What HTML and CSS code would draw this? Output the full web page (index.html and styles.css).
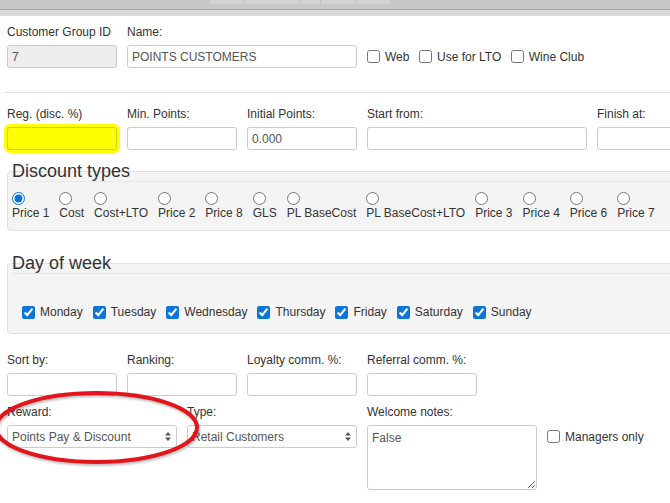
FILE: index.html
```html
<!DOCTYPE html>
<html lang="en">
<head>
    <meta charset="UTF-8">
    <meta name="viewport" content="width=device-width, initial-scale=1.0">
    <title>Customer Group</title>
    <link rel="stylesheet" href="styles.css">
</head>
<body>
    <div class="topbar">
        <div class="tabs">
            <span class="tab" style="width:34px"></span>
            <span class="tab" style="width:54px"></span>
            <span class="tab" style="width:20px"></span>
            <span class="tab" style="width:34px"></span>
            <span class="tab" style="width:34px"></span>
        </div>
    </div>
    <div class="topbar-sub"></div>

    <form class="group-form">
        <div class="row row-first">
            <div class="field w110">
                <label>Customer Group ID</label>
                <input type="text" class="readonly" value="7" readonly>
            </div>
            <div class="field w230">
                <label>Name:</label>
                <input type="text" value="POINTS CUSTOMERS">
            </div>
            <div class="checks top-checks">
                <label class="check"><input type="checkbox">Web</label>
                <label class="check"><input type="checkbox">Use for LTO</label>
                <label class="check"><input type="checkbox">Wine Club</label>
            </div>
        </div>

        <div class="divider"></div>

        <div class="row row-second">
            <div class="field w110">
                <label>Reg. (disc. %)</label>
                <input type="text" class="highlight">
            </div>
            <div class="field w110">
                <label>Min. Points:</label>
                <input type="text">
            </div>
            <div class="field w110">
                <label>Initial Points:</label>
                <input type="text" value="0.000">
            </div>
            <div class="field w220">
                <label>Start from:</label>
                <input type="text">
            </div>
            <div class="field w220">
                <label>Finish at:</label>
                <input type="text">
            </div>
        </div>

        <div class="box box-discount">
            <div class="box-title">Discount types</div>
            <div class="radios">
                <label class="radio"><input type="radio" name="dtype" checked><span>Price 1</span></label>
                <label class="radio"><input type="radio" name="dtype"><span>Cost</span></label>
                <label class="radio"><input type="radio" name="dtype"><span>Cost+LTO</span></label>
                <label class="radio"><input type="radio" name="dtype"><span>Price 2</span></label>
                <label class="radio"><input type="radio" name="dtype"><span>Price 8</span></label>
                <label class="radio"><input type="radio" name="dtype"><span>GLS</span></label>
                <label class="radio"><input type="radio" name="dtype"><span>PL BaseCost</span></label>
                <label class="radio"><input type="radio" name="dtype"><span>PL BaseCost+LTO</span></label>
                <label class="radio"><input type="radio" name="dtype"><span>Price 3</span></label>
                <label class="radio"><input type="radio" name="dtype"><span>Price 4</span></label>
                <label class="radio"><input type="radio" name="dtype"><span>Price 6</span></label>
                <label class="radio"><input type="radio" name="dtype"><span>Price 7</span></label>
            </div>
        </div>

        <div class="box box-days">
            <div class="box-title">Day of week</div>
            <div class="checks days">
                <label class="check"><input type="checkbox" checked>Monday</label>
                <label class="check"><input type="checkbox" checked>Tuesday</label>
                <label class="check"><input type="checkbox" checked>Wednesday</label>
                <label class="check"><input type="checkbox" checked>Thursday</label>
                <label class="check"><input type="checkbox" checked>Friday</label>
                <label class="check"><input type="checkbox" checked>Saturday</label>
                <label class="check"><input type="checkbox" checked>Sunday</label>
            </div>
        </div>

        <div class="row row-third">
            <div class="field w110">
                <label>Sort by:</label>
                <input type="text">
            </div>
            <div class="field w110">
                <label>Ranking:</label>
                <input type="text">
            </div>
            <div class="field w110">
                <label>Loyalty comm. %:</label>
                <input type="text">
            </div>
            <div class="field w110">
                <label>Referral comm. %:</label>
                <input type="text">
            </div>
        </div>

        <div class="row row-fourth">
            <div class="field w170">
                <label>Reward:</label>
                <div class="select-wrap">
                    <select>
                        <option>Points Pay &amp; Discount</option>
                    </select>
                    <svg class="arrows" width="6" height="9" viewBox="0 0 6 9"><path d="M3 0 L6 3.5 L0 3.5 Z M3 9 L6 5.5 L0 5.5 Z" fill="#555"/></svg>
                </div>
            </div>
            <div class="field w170">
                <label>Type:</label>
                <div class="select-wrap">
                    <select>
                        <option>Retail Customers</option>
                    </select>
                    <svg class="arrows" width="6" height="9" viewBox="0 0 6 9"><path d="M3 0 L6 3.5 L0 3.5 Z M3 9 L6 5.5 L0 5.5 Z" fill="#555"/></svg>
                </div>
            </div>
            <div class="field w170">
                <label>Welcome notes:</label>
                <textarea>False</textarea>
            </div>
            <div class="checks bottom-check">
                <label class="check"><input type="checkbox">Managers only</label>
            </div>
        </div>
    </form>

    <svg class="mark" width="230" height="100" viewBox="0 0 230 100">
        <ellipse cx="106.5" cy="49.5" rx="100.5" ry="34.5" fill="none" stroke="#e3141c" stroke-width="4"/>
    </svg>
</body>
</html>
```

FILE: styles.css
```css
html, body {
    margin: 0;
    overflow: hidden;
}

body {
    font-family: "Liberation Sans", Arial, sans-serif;
    font-size: 12px;
    color: #333;
    background: #fff;
}

.topbar {
    height: 9px;
    background: #c8c8c8;
    border-bottom: 1px solid #a6a6a6;
}

.tabs {
    display: flex;
    margin-left: 210px;
}

.tab {
    height: 4px;
    background: #d3d3d3;
    border-right: 1px solid #c3c3c3;
}

.topbar-sub {
    height: 6px;
    background: #dadada;
}

.group-form {
    padding-left: 7px;
}

.row {
    display: flex;
    gap: 10px;
    align-items: flex-start;
}

.row-first {
    padding-top: 9px;
}

.row-second {
    margin-top: 14px;
}

.row-third {
    margin-top: 19px;
}

.row-fourth {
    margin-top: 9px;
}

.field {
    display: flex;
    flex-direction: column;
    flex-shrink: 0;
}

.field label {
    line-height: 14px;
    margin-bottom: 6px;
    white-space: nowrap;
}

.w110 { width: 110px; }
.w170 { width: 170px; }
.w220 { width: 220px; }
.w230 { width: 230px; }

input[type=text], select, textarea {
    box-sizing: border-box;
    width: 100%;
    height: 23px;
    margin: 0;
    padding: 0 4px;
    border: 1px solid #ccc;
    border-radius: 3px;
    font-family: "Liberation Sans", Arial, sans-serif;
    font-size: 12px;
    color: #555;
    background: #fff;
    outline: none;
}

input.readonly {
    background: #eee;
}

input.highlight {
    background: #ffff00;
    border-color: #cccc2a;
    box-shadow: 0 0 0 3px #ffff00;
}

.select-wrap {
    position: relative;
}

.select-wrap select {
    appearance: none;
    -webkit-appearance: none;
}

.arrows {
    position: absolute;
    right: 6px;
    top: 7px;
    pointer-events: none;
}

textarea {
    height: 65px;
    padding: 4px;
    line-height: 16px;
    resize: both;
}

.divider {
    margin: 24px 0 0 -2px;
    border-top: 1px solid #e4e4e4;
}

.checks {
    display: flex;
    align-items: center;
}

.check {
    display: flex;
    align-items: center;
    gap: 5px;
    line-height: 14px;
    white-space: nowrap;
}

.check input, .radio input {
    width: 13px;
    height: 13px;
    margin: 0;
    accent-color: #0b76d8;
}

.top-checks {
    gap: 9.5px;
    margin-top: 20px;
    height: 23px;
}

.bottom-check {
    margin-top: 20px;
    height: 23px;
}

.box {
    width: 680px;
    border: 1px solid #e0e0e0;
    border-radius: 4px;
    background: #f4f4f4;
    padding: 0 4px;
}

.box-discount {
    margin-top: 21px;
    padding-bottom: 10px;
}

.box-days {
    margin-top: 32px;
    padding-bottom: 14px;
}

.box-title {
    margin-top: -11px;
    font-size: 18px;
    line-height: 20px;
    color: #333;
    border-bottom: 1px solid #e6e6e6;
}

.radios {
    display: flex;
    gap: 10px;
    padding-top: 10px;
}

.radio {
    display: flex;
    flex-direction: column;
    align-items: flex-start;
    white-space: nowrap;
}

.radio span {
    margin-top: 1px;
    line-height: 14px;
}

.days {
    gap: 10px;
    padding: 31px 0 0 10px;
}

.mark {
    position: absolute;
    left: -10px;
    top: 378px;
    filter: drop-shadow(1px 2px 1px rgba(0, 0, 0, 0.25));
}
```
